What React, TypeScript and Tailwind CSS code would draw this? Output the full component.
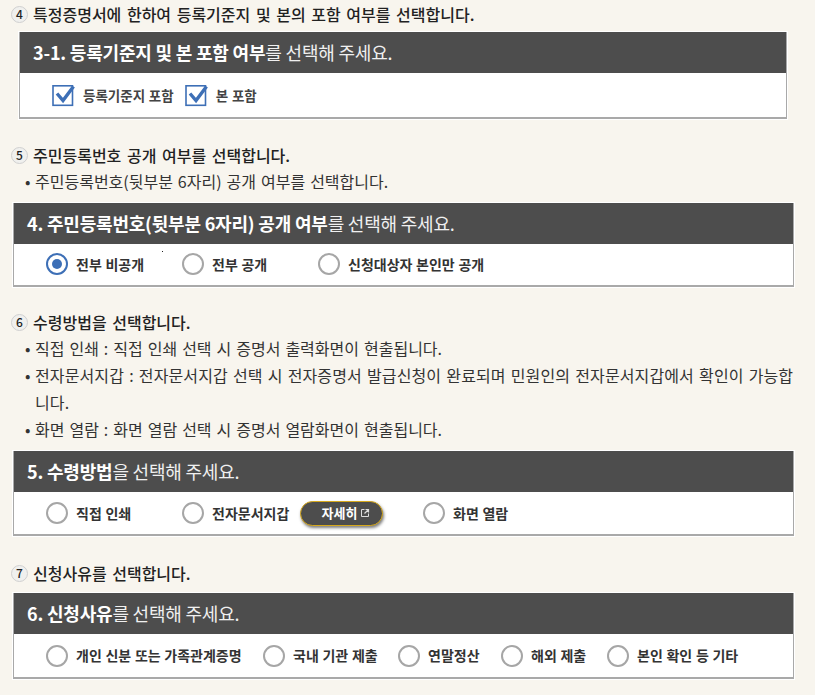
import React from "react";

const font = { fontFamily: '"Noto Sans CJK KR", "Noto Sans", sans-serif' };

function Num({ n }: { n: string }) {
  return (
    <span className="mr-[5px] flex h-[17px] w-[17px] shrink-0 items-center justify-center rounded-full border border-[#d0d0d0] bg-[#f0f0ee] text-[12px] font-medium leading-none text-[#222]">
      {n}
    </span>
  );
}

function Step({ n, children, className = "" }: { n: string; children: React.ReactNode; className?: string }) {
  return (
    <div className={`flex h-[26px] items-center pl-[11px] text-[16px] font-medium text-[#222] [word-spacing:2px] ${className}`}>
      <Num n={n} />
      <span>{children}</span>
    </div>
  );
}

function Bullet({ children, className = "" }: { children: React.ReactNode; className?: string }) {
  return (
    <div className={`flex pl-[25px] pr-[18px] text-[16px] leading-[27px] text-[#333] [word-spacing:1.4px] ${className}`}>
      <span className="w-[10px] shrink-0">•</span>
      <span>{children}</span>
    </div>
  );
}

function Panel({ bold, rest, className = "", children }: { bold: string; rest: string; className?: string; children: React.ReactNode }) {
  return (
    <div className={`relative border-b-2 border-l border-r border-[#a9a9a9] bg-white shadow-[0_0_0_1px_#ffffff] ${className}`}>
      <div className="flex h-[41px] items-center bg-[#4d4d4d] pl-[13px] text-[18px] tracking-[-0.2px] text-[#f0f0f0]">
        <span className="font-bold text-white">{bold}</span>
        <span>{rest}</span>
      </div>
      {children}
    </div>
  );
}

function Radio({ label, checked = false, width }: { label: string; checked?: boolean; width: string }) {
  return (
    <div className={`flex items-center ${width}`}>
      <span className={`flex h-[22px] w-[22px] shrink-0 items-center justify-center rounded-full border-2 bg-white ${checked ? "border-[#3d6fb6]" : "border-[#a6a6a6]"}`}>
        {checked && <span className="h-[10px] w-[10px] rounded-full bg-[#3d6fb6]" />}
      </span>
      <span className="ml-2 whitespace-nowrap text-[14px] font-bold text-[#333] [word-spacing:0.5px]">{label}</span>
    </div>
  );
}

function Check({ label }: { label: string }) {
  return (
    <div className="flex items-center">
      <svg width="24" height="23" viewBox="0 0 24 23" fill="none">
        <rect x="1" y="1.8" width="19.5" height="19.5" stroke="#3d6fb6" strokeWidth="1.6" fill="#fff" />
        <path d="M5 9.5 L11 16.5 L21.5 2.5" stroke="#3d6fb6" strokeWidth="3.4" fill="none" />
      </svg>
      <span className="ml-[7px] whitespace-nowrap text-[13.5px] font-bold text-[#444] [word-spacing:0.7px]">{label}</span>
    </div>
  );
}

export default function App() {
  return (
    <div className="h-[695px] w-[815px] overflow-hidden bg-[#f8f5ee]" style={font}>
      <Step n="4" className="mt-[1px]">특정증명서에 한하여 등록기준지 및 본의 포함 여부를 선택합니다.</Step>
      <Panel bold="3-1. 등록기준지 및 본 포함 여부" rest="를 선택해 주세요." className="ml-[19px] mr-[28px] mt-[5px]">
        <div className="flex h-[44px] items-center gap-[11px] pl-[32px]">
          <Check label="등록기준지 포함" />
          <Check label="본 포함" />
        </div>
      </Panel>

      <Step n="5" className="mt-[23px]">주민등록번호 공개 여부를 선택합니다.</Step>
      <Bullet>주민등록번호(뒷부분 6자리) 공개 여부를 선택합니다.</Bullet>
      <Panel bold="4. 주민등록번호(뒷부분 6자리) 공개 여부" rest="를 선택해 주세요." className="ml-[13px] mr-[21px] mt-[8px]">
        <span className="absolute left-[148px] top-[48px] h-px w-px bg-[#222]" />
        <div className="flex h-[41px] items-center pb-px pl-[32px]">
          <Radio label="전부 비공개" checked width="w-[136px]" />
          <Radio label="전부 공개" width="w-[136px]" />
          <Radio label="신청대상자 본인만 공개" width="w-[200px]" />
        </div>
      </Panel>

      <Step n="6" className="mt-[22px]">수령방법을 선택합니다.</Step>
      <Bullet>직접 인쇄 : 직접 인쇄 선택 시 증명서 출력화면이 현출됩니다.</Bullet>
      <Bullet className="tracking-[0.12px]">전자문서지갑 : 전자문서지갑 선택 시 전자증명서 발급신청이 완료되며 민원인의 전자문서지갑에서 확인이 가능합니다.</Bullet>
      <Bullet>화면 열람 : 화면 열람 선택 시 증명서 열람화면이 현출됩니다.</Bullet>
      <Panel bold="5. 수령방법" rest="을 선택해 주세요." className="ml-[13px] mr-[21px] mt-[8px]">
        <div className="flex h-[42px] items-center pl-[32px]">
          <Radio label="직접 인쇄" width="w-[136px]" />
          <Radio label="전자문서지갑" width="w-[118px]" />
          <button className="flex h-[25px] w-[83px] items-center justify-center rounded-full border border-[#d6a81c] bg-[#4d4d4d] text-[13px] font-bold text-white shadow-[1px_2px_3px_rgba(0,0,0,0.5)]">
            <span className="ml-[9px]">자세히</span>
            <svg width="10" height="10" viewBox="0 0 10 10" fill="none" className="ml-[3px]">
              <path d="M4.5 1.5H1.5V8.5H8.5V5.5" stroke="#ddd" strokeWidth="1" />
              <path d="M4.5 5.5L8.5 1.5M5.5 1.5H8.5V4.5" stroke="#ddd" strokeWidth="1.2" />
            </svg>
          </button>
          <Radio label="화면 열람" width="ml-[40px] w-[120px]" />
        </div>
      </Panel>

      <Step n="7" className="mt-[24px]">신청사유를 선택합니다.</Step>
      <Panel bold="6. 신청사유" rest="를 선택해 주세요." className="ml-[13px] mr-[21px] mt-[7px]">
        <div className="flex h-[43px] items-center pl-[32px]">
          <Radio label="개인 신분 또는 가족관계증명" width="w-[217px]" />
          <Radio label="국내 기관 제출" width="w-[135px]" />
          <Radio label="연말정산" width="w-[103px]" />
          <Radio label="해외 제출" width="w-[106px]" />
          <Radio label="본인 확인 등 기타" width="w-[150px]" />
        </div>
      </Panel>
    </div>
  );
}
